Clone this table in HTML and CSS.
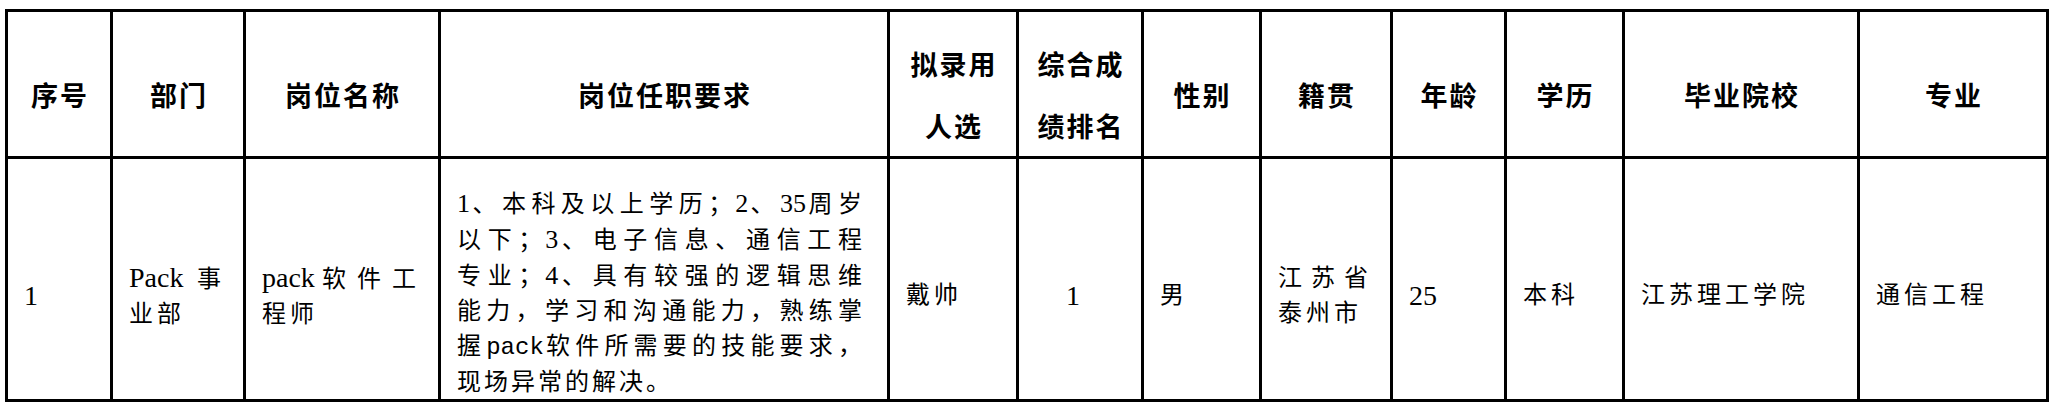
FILE: index.html
```html
<!DOCTYPE html>
<html lang="zh-CN">
<head>
<meta charset="utf-8">
<title>拟录用人员名单</title>
<link rel="stylesheet" href="styles.css">
</head>
<body>
<div class="sheet">
  <div class="cell head">序号</div>
  <div class="cell head">部门</div>
  <div class="cell head">岗位名称</div>
  <div class="cell head">岗位任职要求</div>
  <div class="cell head"><div>拟录用</div><div>人选</div></div>
  <div class="cell head"><div>综合成</div><div>绩排名</div></div>
  <div class="cell head">性别</div>
  <div class="cell head">籍贯</div>
  <div class="cell head">年龄</div>
  <div class="cell head">学历</div>
  <div class="cell head">毕业院校</div>
  <div class="cell head">专业</div>

  <div class="cell body"><span class="num">1</span></div>
  <div class="cell body"><div class="jl"><span class="num">Pack</span> 事</div><div>业部</div></div>
  <div class="cell body"><div class="jl"><span class="num">pack</span>软件工</div><div>程师</div></div>
  <div class="cell body req">
    <div class="jl"><span class="d">1</span>、本科及以上学历；<span class="d">2</span>、<span class="d">35</span>周岁</div>
    <div class="jl">以下；<span class="d">3</span>、电子信息、通信工程</div>
    <div class="jl">专业；<span class="d">4</span>、具有较强的逻辑思维</div>
    <div class="jl">能力，学习和沟通能力，熟练掌</div>
    <div class="jl">握<span class="mono">pack</span>软件所需要的技能要求，</div>
    <div>现场异常的解决。</div>
  </div>
  <div class="cell body">戴帅</div>
  <div class="cell body center"><span class="num">1</span></div>
  <div class="cell body">男</div>
  <div class="cell body"><div class="jl">江苏省</div><div>泰州市</div></div>
  <div class="cell body"><span class="num">25</span></div>
  <div class="cell body">本科</div>
  <div class="cell body">江苏理工学院</div>
  <div class="cell body">通信工程</div>
</div>
</body>
</html>
```

FILE: styles.css
```css
html, body {
  margin: 0;
  background: #ffffff;
}

body {
  color: #000000;
  font-family: "Liberation Serif", "Noto Sans CJK SC", sans-serif;
}

.sheet {
  display: grid;
  grid-template-columns: 105px 133px 195px 449px 129px 125px 118px 131px 114px 118px 235px 189px;
  grid-template-rows: 147px 243px;
  width: max-content;
  margin: 9px 0 0 5px;
  border-top: 3px solid #000000;
  border-left: 3px solid #000000;
}

.cell {
  box-sizing: border-box;
  border-right: 3px solid #000000;
  border-bottom: 3px solid #000000;
  display: flex;
  flex-direction: column;
  justify-content: center;
  min-width: 0;
}

.head {
  padding: 26px 0 0 2px;
  font-size: 27px;
  font-weight: 700;
  line-height: 62px;
  letter-spacing: 2px;
  text-align: center;
}

.body {
  padding: 33px 18px 0 16px;
  font-size: 24px;
  line-height: 35px;
  letter-spacing: 4px;
  text-align: left;
}

.req {
  padding-top: 28px;
  padding-right: 22px;
  letter-spacing: 3px;
}

.jl {
  text-align: justify;
  text-align-last: justify;
}

.center {
  text-align: center;
  padding-left: 4px;
}

.num {
  font-size: 28px;
  letter-spacing: 0;
}

.d {
  font-size: 26px;
  letter-spacing: 0;
}

.mono {
  font-family: "Liberation Mono", monospace;
  letter-spacing: 0;
}
```
